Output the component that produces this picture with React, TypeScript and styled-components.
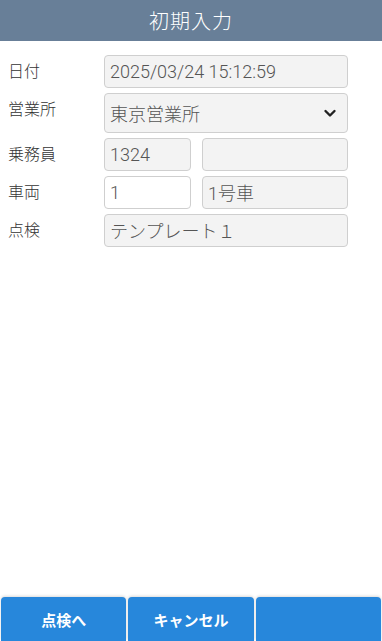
import styled, { createGlobalStyle } from "styled-components"

const Global = createGlobalStyle`
  html, body { margin: 0; padding: 0; height: 100%; background: #fff; }
  #root { height: 100%; }
  * { box-sizing: border-box; }
  body { font-family: Roboto, "Noto Sans CJK JP", "Noto Sans", sans-serif; }
`

const Page = styled.div`height: 100vh; display: flex; flex-direction: column; background: #fff;`
const Header = styled.header`
  height: 41px; background: #687f98; color: #fff;
  display: flex; align-items: center; justify-content: center;
  font-size: 20px; font-weight: 300; letter-spacing: 1px;
`
const Form = styled.main`flex: 1; padding: 14px 34px 0 8px; display: flex; flex-direction: column; gap: 5px;`
const Row = styled.div`display: grid; grid-template-columns: 96px 1fr; align-items: center;`
const Label = styled.span`font-size: 16px; font-weight: 300; color: #333; align-self: start; padding-top: 3px;`
const Pair = styled.div`display: grid; grid-template-columns: 87px 1fr; gap: 11px;`
const Field = styled.div<{ $white?: boolean; $tall?: boolean }>`
  height: ${p => p.$tall ? "40px" : "33px"};
  border: 1px solid #cfcfcf; border-radius: 4px;
  background: ${p => p.$white ? "#fff" : "#f3f3f3"};
  color: #555; font-size: 18px; font-weight: 300;
  display: flex; align-items: center; justify-content: space-between;
  padding: 0 10px 1px 5px; white-space: nowrap; overflow: hidden;
`
const Chevron = styled.svg`width: 14px; height: 14px;`
const Footer = styled.footer`display: flex; gap: 2px; padding: 0 1px; height: 44px;`
const Btn = styled.button`
  flex: 1; border: none; border-radius: 4px 4px 0 0; background: #2787db;
  color: #fff; font: 700 15px "Noto Sans CJK JP", "Noto Sans", sans-serif;
  box-shadow: 0 -1px 3px rgba(0,0,0,0.15);
`

export default function App() {
  return (
    <Page>
      <Global />
      <Header>初期入力</Header>
      <Form>
        <Row>
          <Label>日付</Label>
          <Field>2025/03/24 15:12:59</Field>
        </Row>
        <Row>
          <Label>営業所</Label>
          <Field $tall>
            東京営業所
            <Chevron viewBox="0 0 14 14">
              <path d="M2.5 5 L7 9.5 L11.5 5" fill="none" stroke="#222" strokeWidth="2.4" strokeLinecap="round" strokeLinejoin="round" />
            </Chevron>
          </Field>
        </Row>
        <Row>
          <Label>乗務員</Label>
          <Pair>
            <Field>1324</Field>
            <Field></Field>
          </Pair>
        </Row>
        <Row>
          <Label>車両</Label>
          <Pair>
            <Field $white>1</Field>
            <Field>1号車</Field>
          </Pair>
        </Row>
        <Row>
          <Label>点検</Label>
          <Field>テンプレート１</Field>
        </Row>
      </Form>
      <Footer>
        <Btn>点検へ</Btn>
        <Btn>キャンセル</Btn>
        <Btn></Btn>
      </Footer>
    </Page>
  )
}
